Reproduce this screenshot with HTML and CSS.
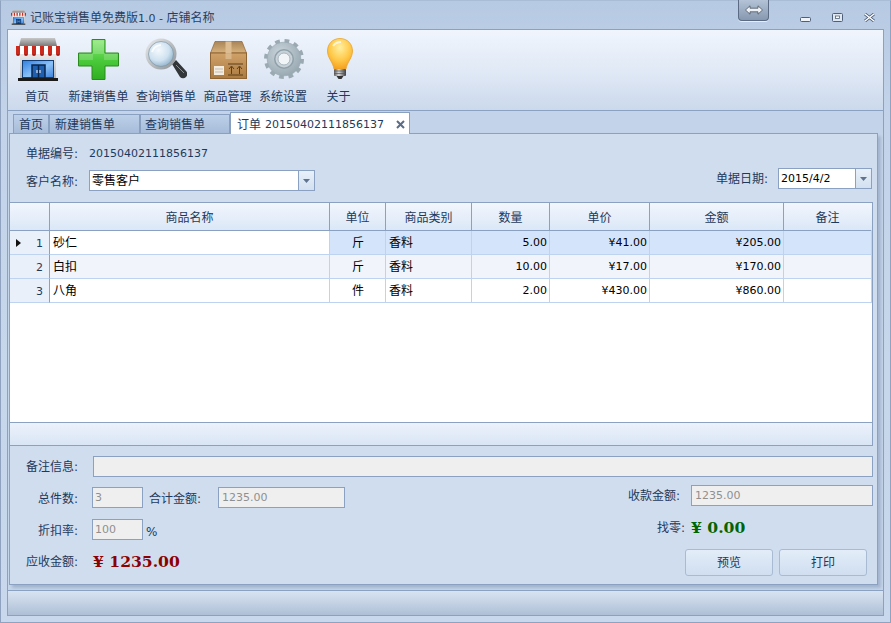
FILE: index.html
```html
<!DOCTYPE html>
<html lang="zh">
<head>
<meta charset="utf-8">
<title>记账宝销售单免费版1.0 - 店铺名称</title>
<link rel="stylesheet" href="styles.css">
</head>
<body>
<svg class="defs" width="0" height="0" aria-hidden="true">
  <defs>
    <linearGradient id="gRoof" x1="0" y1="0" x2="0" y2="1"><stop offset="0" stop-color="#c8c8c8"/><stop offset="1" stop-color="#7a7a7a"/></linearGradient>
    <linearGradient id="gGlass" x1="0" y1="0" x2="1" y2="1"><stop offset="0" stop-color="#2f7fe0"/><stop offset=".55" stop-color="#8cc2f7"/><stop offset="1" stop-color="#3c82dc"/></linearGradient>
    <linearGradient id="gWall" x1="0" y1="0" x2="0" y2="1"><stop offset="0" stop-color="#f0f0f0"/><stop offset="1" stop-color="#b4b4b4"/></linearGradient>
    <linearGradient id="gPlus" x1="0" y1="0" x2="0" y2="1"><stop offset="0" stop-color="#8ee87a"/><stop offset=".5" stop-color="#4ccb3c"/><stop offset="1" stop-color="#2fae22"/></linearGradient>
    <radialGradient id="gLens" cx=".4" cy=".35" r=".7"><stop offset="0" stop-color="#f4f9fd"/><stop offset=".6" stop-color="#cfe2f0"/><stop offset="1" stop-color="#8fb0c8"/></radialGradient>
    <linearGradient id="gRing" x1="0" y1="0" x2="1" y2="1"><stop offset="0" stop-color="#eceef0"/><stop offset="1" stop-color="#8a9094"/></linearGradient>
    <linearGradient id="gBox" x1="0" y1="0" x2="0" y2="1"><stop offset="0" stop-color="#cfa26a"/><stop offset="1" stop-color="#ab7a40"/></linearGradient>
    <linearGradient id="gBoxTop" x1="0" y1="0" x2="0" y2="1"><stop offset="0" stop-color="#a98558"/><stop offset="1" stop-color="#d8b27c"/></linearGradient>
    <radialGradient id="gGear" cx=".4" cy=".35" r=".75"><stop offset="0" stop-color="#ccd6dc"/><stop offset="1" stop-color="#93a4ae"/></radialGradient>
    <radialGradient id="gBulb" cx=".5" cy=".3" r=".75"><stop offset="0" stop-color="#fff0a0"/><stop offset=".55" stop-color="#ffc94a"/><stop offset="1" stop-color="#f59a16"/></radialGradient>
    <linearGradient id="gBase" x1="0" y1="0" x2="1" y2="0"><stop offset="0" stop-color="#5a5a5a"/><stop offset=".4" stop-color="#d8d8d8"/><stop offset="1" stop-color="#3c3c3c"/></linearGradient>
    <symbol id="shop" viewBox="0 0 44 44">
      <path d="M5 0h34l2 8H3z" fill="url(#gRoof)"/>
      <rect x="4" y="14" width="36" height="26" fill="url(#gWall)"/>
      <path d="M0 8h44v8H0z" fill="#fff"/>
      <path d="M0 8h4v8H0zM8 8h4v8H8zM16 8h4v8h-4zM24 8h4v8h-4zM32 8h4v8h-4zM40 8h4v8h-4z" fill="#cc2a1c"/>
      <path d="M0 16h4a2 2 0 0 1-4 0zM8 16h4a2 2 0 0 1-4 0zM16 16h4a2 2 0 0 1-4 0zM24 16h4a2 2 0 0 1-4 0zM32 16h4a2 2 0 0 1-4 0zM40 16h4a2 2 0 0 1-4 0z" fill="#a81c12"/>
      <path d="M4 16h4a2 2 0 0 1-4 0zM12 16h4a2 2 0 0 1-4 0zM20 16h4a2 2 0 0 1-4 0zM28 16h4a2 2 0 0 1-4 0zM36 16h4a2 2 0 0 1-4 0z" fill="#e6e6e6"/>
      <rect x="6.500" y="22.500" width="31" height="17" fill="url(#gGlass)" stroke="#0f3d78"/>
      <rect x="16" y="27" width="13" height="13" fill="#1f5fb0" stroke="#08264d" stroke-width="1.500"/>
      <path d="M22.500 27v13" stroke="#08264d" stroke-width="1.500"/>
      <path d="M21 32v3M24 32v3" stroke="#fff"/>
      <path d="M2 40h40v3H2z" fill="#1a1a1a"/>
    </symbol>
    <symbol id="plus" viewBox="0 0 41 41">
      <path d="M14 .5h13v13.500h13.500v13H27v13.500H14V27H.5V14H14z" fill="url(#gPlus)" stroke="#2a8a1e"/>
      <path d="M15 1.500h11v13.500H15zM1.500 15H15v6H1.500zM26 15h13.500v6H26z" fill="#fff" opacity=".18"/>
    </symbol>
    <symbol id="search" viewBox="0 0 42 42">
      <path d="M27 26l4-4 10 11a4 4 0 0 1-6 6z" fill="#33373a"/>
      <path d="M31 27l8 8" stroke="#8a9096" stroke-width="1"/>
      <circle cx="16" cy="16" r="15.500" fill="url(#gRing)"/>
      <circle cx="16" cy="16" r="12.500" fill="url(#gLens)" stroke="#7d93a4" stroke-width=".7"/>
      <path d="M7 14a10 10 0 0 1 9-7" stroke="#fff" stroke-width="2" fill="none" opacity=".8"/>
    </symbol>
    <symbol id="box" viewBox="0 0 37 38">
      <path d="M5 .5h27l4.500 11.500H.5z" fill="url(#gBoxTop)" stroke="#8d6332" stroke-width=".7"/>
      <rect x=".5" y="12" width="36" height="25.500" fill="url(#gBox)" stroke="#8d6332"/>
      <path d="M15.500 .5h6V12h-6z" fill="#dcbc90"/>
      <path d="M15.500 12h6v6h-6z" fill="#dcbc90" opacity=".8"/>
      <rect x="4" y="25" width="10" height="9" fill="#f4ecdf"/>
      <path d="M5.500 28h7M5.500 31h7" stroke="#8f8f8f" stroke-dasharray="1 1"/>
      <path d="M21.500 33v-7M19 28l2.500-3 2.500 3M29.500 33v-7M27 28l2.500-3 2.500 3M18 34h15M18 23h15" stroke="#5c3f1c" fill="none"/>
    </symbol>
    <symbol id="gear" viewBox="0 0 40 40">
      <circle cx="20" cy="20" r="17.800" fill="none" stroke="#9aa9b2" stroke-width="4.400" stroke-dasharray="4.660 4.660"/>
      <circle cx="20" cy="20" r="16.800" fill="url(#gGear)" stroke="#9aa9b2" stroke-width=".7"/>
      <circle cx="20" cy="20" r="10" fill="#8fa0a9"/>
      <circle cx="20" cy="20" r="8.500" fill="#c8d2d8"/>
      <circle cx="20" cy="20" r="6" fill="#f2f5f7" stroke="#a8b6be"/>
    </symbol>
    <symbol id="bulb" viewBox="0 0 26 42">
      <path d="M13 .5C5.500.5.500 6 .5 13c0 7 5.500 11 6.500 18h12c1-7 6.500-11 6.500-18C25.500 6 20.500.5 13 .5z" fill="url(#gBulb)" stroke="#e8a22e" stroke-width=".8"/>
      <path d="M6 8c2-3 5-4 8-4" stroke="#fff" stroke-width="2" fill="none" opacity=".7"/>
      <rect x="7" y="31" width="12" height="7" rx="1" fill="url(#gBase)"/>
      <path d="M7 33h12M7 35.500h12" stroke="#555" stroke-width=".7"/>
      <path d="M9.500 38h7l-2 3h-3z" fill="#333"/>
    </symbol>
    <symbol id="caret" viewBox="0 0 7 4"><path d="M0 0h7L3.500 4z" fill="#5f7390"/></symbol>
  </defs>
</svg>

<div class="window">
  <div class="swap-tab" aria-hidden="true">
    <svg width="18" height="10" viewBox="0 0 18 10"><path d="M.5 5L5 .8v2.400h8V.8L17.500 5 13 9.200V6.800H5v2.400z" fill="#eef1f6" stroke="#4a5560" stroke-width=".8"/></svg>
  </div>

  <header class="titlebar">
    <svg class="title-icon" width="15" height="15"><use href="#shop"/></svg>
    <span class="title-text">记账宝销售单免费版<span class="num">1.0 - </span>店铺名称</span>
    <div class="win-controls">
      <svg class="ctl-min" width="11" height="5" viewBox="0 0 11 5"><rect x=".5" y=".5" width="10" height="4" rx="1" fill="#f0f3f8" stroke="#4e5f78"/></svg>
      <svg width="11" height="9" viewBox="0 0 11 9"><rect x=".5" y=".5" width="10" height="8" rx="1" fill="#dfe7f2" stroke="#4e5f78"/><rect x="3.500" y="3" width="4" height="2.500" fill="#fff" stroke="#4e5f78" stroke-width=".8"/></svg>
      <svg width="11" height="9" viewBox="0 0 11 9"><path d="M1 1l9 7M10 1l-9 7" stroke="#4e5f78" stroke-width="3"/><path d="M1 1l9 7M10 1l-9 7" stroke="#fff" stroke-width="1.500"/></svg>
    </div>
  </header>

  <nav class="toolbar">
    <a class="tool tool-wide"><svg class="ic-shop" width="44" height="44"><use href="#shop"/></svg><span>首页</span></a>
    <a class="tool"><svg class="ic-plus" width="41" height="41"><use href="#plus"/></svg><span>新建销售单</span></a>
    <a class="tool"><svg class="ic-search" width="42" height="42"><use href="#search"/></svg><span>查询销售单</span></a>
    <a class="tool"><svg class="ic-box" width="37" height="38"><use href="#box"/></svg><span>商品管理</span></a>
    <a class="tool"><svg class="ic-gear" width="40" height="40"><use href="#gear"/></svg><span>系统设置</span></a>
    <a class="tool tool-wide"><svg class="ic-bulb" width="26" height="42"><use href="#bulb"/></svg><span>关于</span></a>
  </nav>

  <div class="content">
    <div class="tabs">
      <div class="tab tab-home">首页</div>
      <div class="tab tab-new">新建销售单</div>
      <div class="tab tab-query">查询销售单</div>
      <div class="tab tab-active">订单 <span class="num">20150402111856137</span>
        <svg class="tab-close" width="9" height="9" viewBox="0 0 9 9"><path d="M1 1l7 7M8 1L1 8" stroke="#5a6c88" stroke-width="2"/></svg>
      </div>
    </div>

    <main class="panel">
      <div class="form-head">
        <div class="row-no"><label class="lbl">单据编号:</label><span class="num no-value">20150402111856137</span></div>
        <div class="row-customer">
          <label class="lbl">客户名称:</label>
          <div class="combo combo-customer"><span class="combo-text">零售客户</span><span class="combo-btn"><svg width="7" height="4"><use href="#caret"/></svg></span></div>
          <div class="date-wrap">
            <label class="lbl">单据日期:</label>
            <div class="combo combo-date"><span class="combo-text num">2015/4/2</span><span class="combo-btn"><svg width="7" height="4"><use href="#caret"/></svg></span></div>
          </div>
        </div>
      </div>

      <div class="grid">
        <table class="grid-table">
          <colgroup>
            <col class="c-head"><col class="c-name"><col class="c-unit"><col class="c-cat"><col class="c-qty"><col class="c-price"><col class="c-amt"><col class="c-note">
          </colgroup>
          <thead>
            <tr><th></th><th>商品名称</th><th>单位</th><th>商品类别</th><th>数量</th><th>单价</th><th>金额</th><th>备注</th></tr>
          </thead>
          <tbody>
            <tr class="row-sel">
              <td class="rh"><svg class="row-arrow" width="5" height="8" viewBox="0 0 5 8"><path d="M0 0l5 4-5 4z" fill="#111"/></svg><span class="num">1</span></td>
              <td class="current">砂仁</td><td class="ctr">斤</td><td>香料</td><td class="r num">5.00</td><td class="r num">¥41.00</td><td class="r num">¥205.00</td><td></td>
            </tr>
            <tr class="row-alt">
              <td class="rh"><span class="num">2</span></td>
              <td>白扣</td><td class="ctr">斤</td><td>香料</td><td class="r num">10.00</td><td class="r num">¥17.00</td><td class="r num">¥170.00</td><td></td>
            </tr>
            <tr>
              <td class="rh"><span class="num">3</span></td>
              <td>八角</td><td class="ctr">件</td><td>香料</td><td class="r num">2.00</td><td class="r num">¥430.00</td><td class="r num">¥860.00</td><td></td>
            </tr>
          </tbody>
        </table>
        <div class="grid-empty"></div>
        <div class="grid-foot"></div>
      </div>

      <div class="form-foot">
        <div class="row-remark"><label class="lbl">备注信息:</label><div class="field field-remark"></div></div>
        <div class="foot-cols">
          <div class="col-left">
            <div class="f-row f-row-count">
              <label class="lbl lbl-r lbl-low">总件数:</label><div class="field field-count num">3</div>
              <label class="lbl lbl-total lbl-low">合计金额:</label><div class="field field-total num">1235.00</div>
            </div>
            <div class="f-row f-row-rate">
              <label class="lbl lbl-r lbl-low">折扣率:</label><div class="field field-count num">100</div><span class="pct num">%</span>
            </div>
            <div class="f-row f-row-due">
              <label class="lbl lbl-r">应收金额:</label><strong class="big due">¥ 1235.00</strong>
            </div>
          </div>
          <div class="col-right">
            <div class="f-row"><label class="lbl lbl-paid">收款金额:</label><div class="field field-paid num">1235.00</div></div>
            <div class="f-row f-row-change"><label class="lbl">找零:</label><strong class="big change">¥ 0.00</strong></div>
            <div class="btns"><button class="btn">预览</button><button class="btn">打印</button></div>
          </div>
        </div>
      </div>
    </main>
  </div>

  <footer class="statusbar"></footer>
</div>
</body>
</html>
```
FILE: styles.css
```css
* { box-sizing: border-box; }
html, body { margin: 0; padding: 0; }
body {
  width: 891px; height: 623px; overflow: hidden;
  font: 12px/16px "DejaVu Sans", "Noto Sans CJK SC", sans-serif;
  color: #1e395b;
}
.defs { position: absolute; }
.num { font-size: 11px; }

.window {
  position: relative;
  width: 891px; height: 623px;
  display: flex; flex-direction: column;
  padding: 0 6px 6px;
  background: linear-gradient(#b7cae3, #c3d4ea 120px, #c9d8ec);
  border: 1px solid #8fa3c0;
  border-top-color: #a9bdd6;
}
.swap-tab {
  position: absolute; left: 737px; top: -1px;
  width: 31px; height: 21px;
  display: flex; align-items: center; justify-content: center;
  background: linear-gradient(#b4c3d6, #8698b0);
  border: 1px solid #5a6b83; border-top: 0;
  border-radius: 0 0 4px 4px;
  box-shadow: 0 1px 0 #e6edf6;
}

.titlebar {
  height: 28px; flex: none;
  display: flex; align-items: center;
  margin: 0 -6px; padding: 5px 7px 0 10px;
}
.title-icon { margin-right: 4px; }
.title-text { line-height: 16px; color: #2a3f5f; margin-top: 1px; }
.win-controls { margin-left: auto; display: flex; align-items: flex-end; gap: 21px; padding-right: 8px; }
.win-controls svg { display: block; }

.toolbar {
  height: 82px; flex: none;
  display: flex; gap: 7.5px;
  padding: 0 0 0 5px;
  background: linear-gradient(#f0f5fd, #dfe8f5 55%, #cbd9ec);
  border: 1px solid #8ba1c1;
}
.tool {
  position: relative;
  width: max-content; height: 80px;
  display: flex; flex-direction: column; align-items: center;
  padding-top: 8px;
  color: #1e395b;
}
.tool-wide { width: 48px; }
.tool svg { display: block; flex: none; }
.tool span { position: absolute; top: 59px; line-height: 16px; white-space: nowrap; }
.tool:not(.tool-wide) span { position: static; margin-top: auto; margin-bottom: 5px; }
.ic-shop { margin-left: 2px; }
.ic-plus { margin-top: 1px; }
.ic-box { margin-top: 3px; margin-left: 1px; }
.ic-gear { margin-top: 1px; margin-left: 2px; }
.ic-bulb { margin-left: 3px; }

.content {
  flex: 1; min-height: 0;
  display: flex; flex-direction: column;
  border-left: 1px solid #8ba1c1;
  border-right: 1px solid #8ba1c1;
  background: #c6d6ea;
}
.tabs {
  height: 22px; flex: none;
  display: flex; align-items: flex-end;
  padding-left: 5px;
  background: #c3d4ea;
}
.tab {
  height: 19px;
  padding-left: 5px;
  line-height: 20px;
  white-space: nowrap;
  background: linear-gradient(#bcd0e9, #a7bcd9);
  border: 1px solid #8aa0c1; border-bottom: 0;
  color: #1e395b;
}
.tab-home { width: 36px; }
.tab-new { width: 91px; }
.tab-query { width: 90px; padding-left: 4px; }
.tab-active {
  width: 180px; height: 22px;
  padding: 2px 0 0 6px;
  margin-bottom: -1px;
  position: relative; z-index: 1;
  display: flex; align-items: center; gap: 4px;
  background: #fff; border-color: #8aa0c1; border-bottom: 0;
}
.tab-close { margin-left: 8px; }

.panel {
  flex: 1; min-height: 0;
  margin: 0 5px 5px 1px;
  padding-right: 4px;
  display: flex; flex-direction: column;
  background: #d0ddee;
  border: 1px solid #8ba1c1;
  box-shadow: 3px 3px 3px rgba(120,140,170,.45);
}
.lbl { white-space: nowrap; color: #1e395b; }

.form-head { height: 68px; flex: none; padding: 12px 0 0 16px; }
.row-no { display: flex; height: 16px; line-height: 16px; }
.no-value { margin-left: 11px; }
.row-customer { display: flex; margin-top: 8px; align-items: flex-start; }
.row-customer > .lbl { line-height: 16px; margin-top: 4px; }
.combo {
  height: 21px; display: flex;
  background: #fff; border: 1px solid #8ba1c1;
  color: #000;
}
.combo-customer { width: 226px; margin-left: 11px; }
.combo-date { width: 94px; margin-left: 10px; }
.combo-text { flex: 1; padding-left: 2px; line-height: 20px; }
.combo-btn {
  width: 16px; flex: none;
  display: flex; align-items: center; justify-content: center;
  background: linear-gradient(#e8f0fa, #d3e0f1);
  border-left: 1px solid #8ba1c1;
}
.combo-btn svg { display: block; }
.date-wrap { margin-left: auto; display: flex; margin-top: -2px; margin-right: 1px; }
.date-wrap .lbl { line-height: 23px; }

.grid {
  height: 244px; flex: none;
  display: flex; flex-direction: column;
  background: #fff;
  border-top: 1px solid #8ba1c1;
  border-bottom: 1px solid #8ba1c1;
  border-right: 1px solid #8ba1c1;
}
.grid-table { width: 862px; table-layout: fixed; border-collapse: separate; border-spacing: 0; flex: none; }
.c-head { width: 40px; } .c-name { width: 280px; } .c-unit { width: 56px; } .c-cat { width: 86px; }
.c-qty { width: 78px; } .c-price { width: 100px; } .c-amt { width: 134px; } .c-note { width: 88px; }
.grid-table th {
  height: 28px; padding: 2px 0 0;
  font-weight: 400; text-align: center; color: #1e395b;
  background: linear-gradient(#f2f6fd, #dbe7f7);
  border-right: 1px solid #8ba1c1; border-bottom: 1px solid #8ba1c1;
}
.grid-table th:last-child { border-right-color: transparent; }
.grid-table td {
  height: 24px; padding: 1px 2px 0 3px;
  color: #000; white-space: nowrap; line-height: 16px;
  border-right: 1px solid #bdd3ef; border-bottom: 1px solid #bdd3ef;
}
.row-sel td { background: #d4e5fb; }
.row-alt td { background: #f1f4fb; }
.grid-table td.current { background: #fff; }
.grid-table td.rh {
  background: #e9f0fa; color: #1e395b;
  text-align: right; padding-right: 6px; position: relative;
  border-right-color: #8ba1c1;
}
.row-arrow { position: absolute; left: 6px; top: 8px; }
.ctr { text-align: center; }
.r { text-align: right; }
.grid-table td.r { font-size: 11px; }
.grid-empty { flex: 1; border-bottom: 1px solid #8ba1c1; }
.grid-foot { height: 22px; flex: none; background: linear-gradient(#ecf2fb, #d9e5f5); }

.form-foot { flex: 1; padding: 10px 0 0 16px; }
.row-remark { display: flex; height: 21px; line-height: 23px; }
.field {
  height: 21px; padding-left: 2px;
  background: #efefef; border: 1px solid #8ba1c1;
  color: #8f8f8f; line-height: 19px; white-space: nowrap;
}
.field-remark { width: 780px; margin-left: 15px; }
.foot-cols { display: flex; justify-content: space-between; }
.col-left { padding-top: 10px; }
.f-row { display: flex; align-items: center; height: 21px; }
.lbl-r { width: 52px; text-align: right; }
.lbl-low { padding-top: 2px; }
.lbl-paid { padding-top: 1px; }
.field-count { width: 51px; margin-left: 14px; }
.lbl-total { margin-left: 6px; }
.field-total { width: 127px; margin-left: 17px; padding-left: 3px; }
.f-row-rate { margin-top: 11px; }
.pct { margin-left: 3px; padding-top: 4px; font-size: 12px; }
.f-row-due { margin-top: 11px; }
.big { font: 700 15.600px/20px "DejaVu Serif", serif; white-space: nowrap; }
.due { margin-left: 15px; color: #8b0000; }
.change { margin-left: 6px; color: #006400; }

.col-right { display: flex; flex-direction: column; align-items: flex-end; padding-top: 8px; }
.field-paid { width: 182px; margin-left: 11px; padding-left: 3px; }
.f-row-change { margin-top: 11px; align-self: flex-start; margin-left: 29px; }
.btns { display: flex; gap: 6px; margin-top: 11px; margin-right: 6px; }
.btn {
  width: 88px; height: 27px; padding: 1px 0 0;
  font: inherit; color: #1e395b;
  background: linear-gradient(#e3edf9, #d0def0);
  border: 1px solid #a9bbd3; border-radius: 3px;
}

.statusbar {
  height: 26px; flex: none;
  background: linear-gradient(#d9e4f2, #aebfd6);
  border: 1px solid #8ba1c1;
}
```
